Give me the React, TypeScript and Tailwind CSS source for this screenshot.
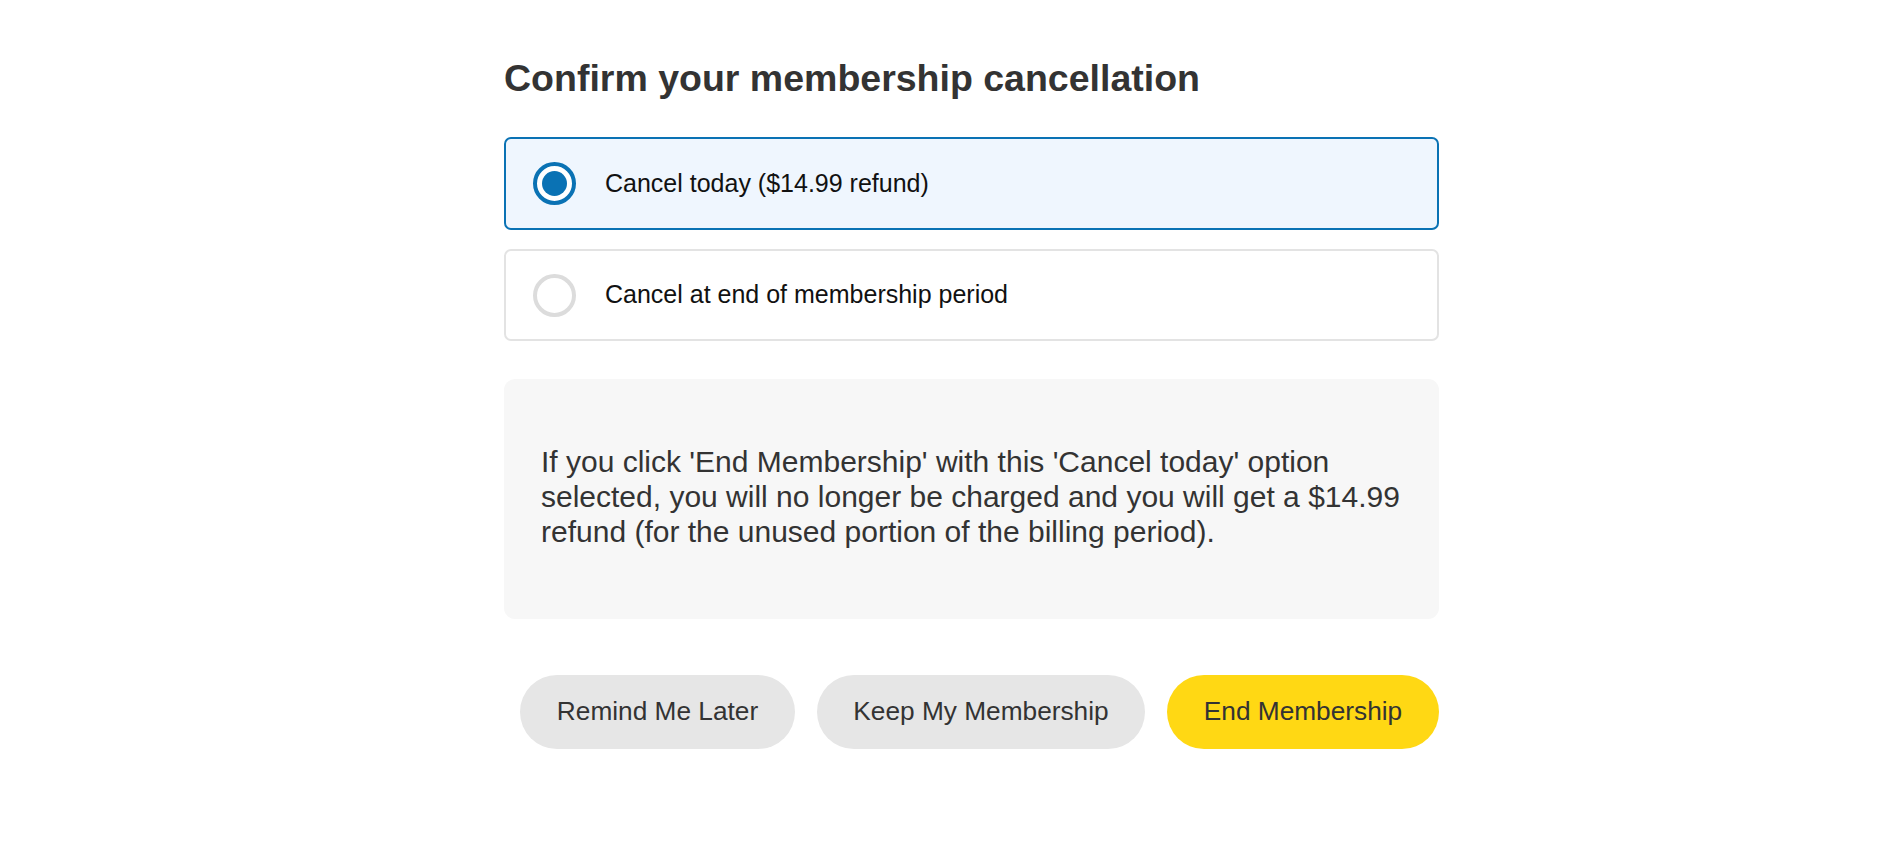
import React, { useState } from "react";

const options = [
  { id: "today", label: "Cancel today ($14.99 refund)" },
  { id: "end", label: "Cancel at end of membership period" },
];

export default function App() {
  const [selected, setSelected] = useState("today");
  return (
    <div
      className="min-h-screen w-full bg-white text-[#333]"
      style={{ fontFamily: '"Liberation Sans", Arial, sans-serif' }}
    >
      <div className="pl-[504px] pt-[57px]">
        <div className="w-[935px] flex flex-col">
          <h1 className="text-[37.5px] font-bold leading-[43px] text-[#333]">
            Confirm your membership cancellation
          </h1>
          <div className="mt-[37px] flex flex-col gap-[19px]">
            {options.map((o) => {
              const on = selected === o.id;
              return (
                <button
                  key={o.id}
                  onClick={() => setSelected(o.id)}
                  className={
                    on
                      ? "h-[93px] flex items-center pl-[27px] rounded-[7px] border-2 border-[#0a72b4] bg-[#eff6fe] text-left"
                      : "h-[92px] flex items-center pl-[27px] rounded-[7px] border-2 border-[#e3e3e3] bg-white text-left"
                  }
                >
                  {on ? (
                    <span className="w-[43px] h-[43px] rounded-full border-[4px] border-[#0a72b4] bg-white flex items-center justify-center shrink-0">
                      <span className="w-[25px] h-[25px] rounded-full bg-[#0a72b4]" />
                    </span>
                  ) : (
                    <span className="w-[43px] h-[43px] rounded-full border-[4px] border-[#dcdcdc] bg-white shrink-0" />
                  )}
                  <span className="ml-[29px] text-[25px] text-[#111]">{o.label}</span>
                </button>
              );
            })}
          </div>
          <div className="mt-[38px] h-[240px] rounded-[11px] bg-[#f7f7f7] flex items-center pl-[37px] pr-[30px] pb-[6px]">
            <p className="text-[30px] leading-[35px] text-[#333]">
              If you click 'End Membership' with this 'Cancel today' option
              <br />
              selected, you will no longer be charged and you will get a $14.99
              <br />
              refund (for the unused portion of the billing period).
            </p>
          </div>
          <div className="mt-[56px] flex justify-end gap-[22px]">
            <button className="h-[74px] w-[275px] rounded-full bg-[#e6e6e6] text-[26.25px] text-[#333]">
              Remind Me Later
            </button>
            <button className="h-[74px] w-[328px] rounded-full bg-[#e6e6e6] text-[26.25px] text-[#333]">
              Keep My Membership
            </button>
            <button className="h-[74px] w-[272px] rounded-full bg-[#ffd814] text-[26.25px] text-[#333]">
              End Membership
            </button>
          </div>
        </div>
      </div>
    </div>
  );
}
